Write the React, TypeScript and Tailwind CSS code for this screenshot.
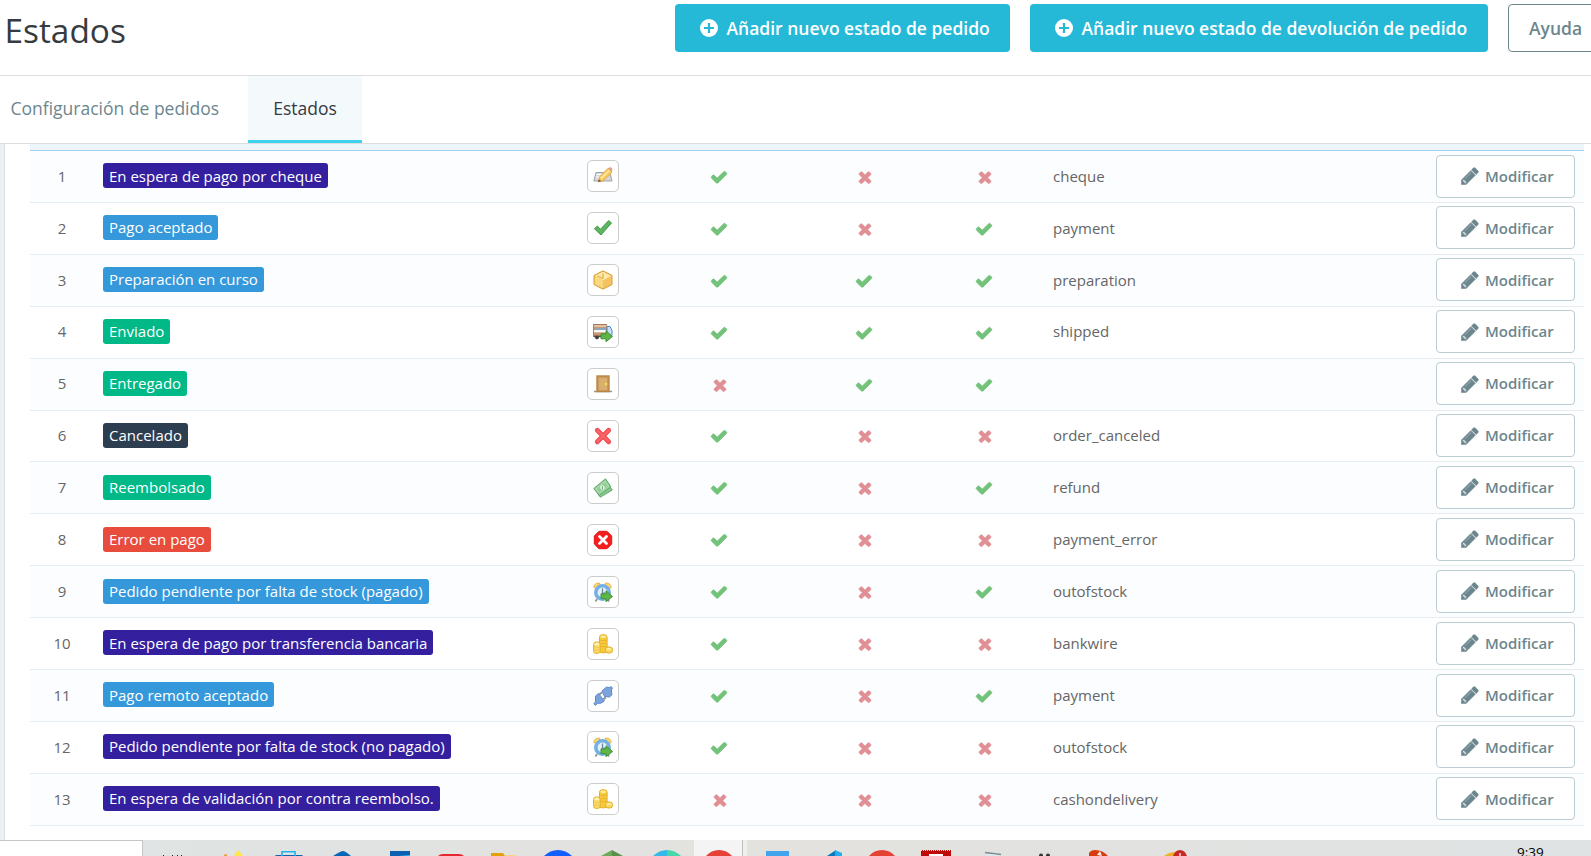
import type { ReactNode } from "react";

const PATHS = {
  check:
    "M1671 566q0 40-28 68l-724 724-136 136q-28 28-68 28t-68-28l-136-136-362-362q-28-28-28-68t28-68l136-136q28-28 68-28t68 28l294 295 656-657q28-28 68-28t68 28l136 136q28 28 28 68z",
  times:
    "M1490 1322q0 40-28 68l-136 136q-28 28-68 28t-68-28l-294-294-294 294q-28 28-68 28t-68-28l-136-136q-28-28-28-68t28-68l294-294-294-294q-28-28-28-68t28-68l136-136q28-28 68-28t68 28l294 294 294-294q28-28 68-28t68 28l136 136q28 28 28 68t-28 68l-294 294 294 294q28 28 28 68z",
  pencil:
    "M491 1536l91-91-235-235-91 91v107h128v128h107zm523-928q0-22-22-22-10 0-17 7l-542 542q-7 7-7 17 0 22 22 22 10 0 17-7l542-542q7-7 7-17zm-54-192l416 416-832 832h-416v-416zm683 96q0 53-37 90l-166 166-416-416 166-165q36-38 90-38 53 0 91 38l235 234q37 39 37 91z",
};

function Flag({ on }: { on: boolean }) {
  return on ? (
    <svg viewBox="0 0 1792 1792" className="mt-px size-[18px] fill-[#72c279] stroke-[#72c279] stroke-[90]">
      <path d={PATHS.check} />
    </svg>
  ) : (
    <svg viewBox="0 0 1792 1792" className="mt-px ml-px size-[18px] fill-[#e08f95] stroke-[#e08f95] stroke-[70]">
      <path d={PATHS.times} />
    </svg>
  );
}

function Plus() {
  return (
    <svg viewBox="0 0 18 18" className="size-[18px]">
      <circle cx="9" cy="9" r="9" fill="#fff" />
      <path d="M9 4v10M4 9h10" stroke="#25b9d7" strokeWidth="2.2" />
    </svg>
  );
}

const arrow = (
  <path d="M8 11.800h5V8.800l6.500 5.700-6.500 5.200v-2.900H8z" fill="#5fb648" stroke="#3f9038" strokeWidth="1" strokeLinejoin="round" />
);

const coins = (
  <>
    <rect x="6.500" y=".8" width="7.600" height="18" rx="2.500" fill="#f6c93c" stroke="#e6ad2a" />
    <ellipse cx="10.300" cy="2.800" rx="3" ry="1.400" fill="#ffed9c" />
    <path d="M7.500 6.500h6M7.500 9.500h6M7.500 12.500h6" stroke="#e7b02c" strokeWidth=".8" />
    <rect x=".6" y="8" width="6.600" height="11.400" rx="2.500" fill="#fbdc68" stroke="#e6ad2a" />
    <ellipse cx="3.900" cy="10" rx="2.500" ry="1.300" fill="#fff3b8" />
    <path d="M1.500 13.300h5M1.500 16.200h5" stroke="#ecc04a" strokeWidth=".8" />
    <rect x="12.300" y="13" width="7.200" height="6" rx="2.600" fill="#fbd95c" stroke="#e6ad2a" />
    <ellipse cx="15.900" cy="15" rx="2.500" ry="1.100" fill="#fff0a6" />
  </>
);

const clock = (
  <>
    <path d="M4 17l-1.500 2.500M14.500 17l1.500 2.500" stroke="#999" strokeWidth="2" />
    <path d="M.8 5.500Q1 1 6.500 1L7 2.500 3 6.300z" fill="#ffd66b" stroke="#e9b44c" />
    <path d="M18.200 5.500Q18 1 12.500 1L12 2.500 16 6.300z" fill="#ffd66b" stroke="#e9b44c" />
    <circle cx="9.500" cy="10.500" r="6.700" fill="#e3f0fb" stroke="#74b1e2" strokeWidth="3.600" />
    <path d="M9.500 6.500v4.500h3" stroke="#6c7f92" strokeWidth="1.200" fill="none" />
    {arrow}
  </>
);

const PICTURES: Record<string, ReactNode> = {
  cheque: (
    <>
      <path d="M3 6.500h14l2 8.500H.8z" fill="#d5d7d8" stroke="#9fa4a7" />
      <path d="M3.500 8.500h7M3 11h5" stroke="#fff" strokeWidth="1.200" />
      <path d="M5.300 15.600l1.500-5L14.800 2.400l4 1-.3 3.600L9.800 15z" fill="#fbc95a" stroke="#dfa040" strokeWidth=".8" />
      <path d="M8 12.300l8.300-8" stroke="#ffeaa8" strokeWidth="1.700" />
      <path d="M15 2.500l1-1q2-.9 3.200 1v1.600l-1.200 1.200z" fill="#e0a48e" />
      <path d="M5 16.200l.9-3 2.300 2z" fill="#6e594a" />
    </>
  ),
  ok: (
    <path d="M1.400 10.800l3-2.800 3 3.300L15.600 2.600l3 2.300L8 17z" fill="#5db460" stroke="#459c4c" strokeLinejoin="round" />
  ),
  box: (
    <>
      <path d="M10 .8l9 4.600v9.200l-9 4.600-9-4.600V5.400z" fill="#f3c361" stroke="#d9a03c" strokeLinejoin="round" />
      <path d="M10 1.700l8 4.200-8 4.300-8-4.300z" fill="#fdeaae" />
      <path d="M2 6.500l8 4.100v7.600l-8-4.200z" fill="#f9d880" />
      <path d="M10 3.500v5.200M10 8.700L4.500 6" stroke="#eabb5a" strokeWidth="1.500" />
    </>
  ),
  truck: (
    <>
      <rect x=".6" y="2.500" width="13" height="11.500" fill="#c99872" stroke="#a57a5a" />
      <path d="M1 4h12.500" stroke="#ecd2bb" strokeWidth="1.400" />
      <path d="M2 7h11" stroke="#69afe4" strokeWidth="1.400" />
      <path d="M1 9.200h12" stroke="#fff" strokeWidth="2.200" />
      <path d="M14 4.500h3l2 4v5h-5z" fill="#c8e3fb" stroke="#4c86d8" />
      <path d="M.5 14.500h10" stroke="#555" strokeWidth="1.400" />
      <circle cx="4" cy="15.400" r="1.900" fill="#3f3f3f" />
      {arrow}
    </>
  ),
  door: (
    <>
      <path d="M1 17.500h18" stroke="#8f9599" strokeWidth="1.500" />
      <rect x="4" y="2" width="12" height="15.500" fill="#cb9a58" stroke="#b98648" strokeWidth="1.400" />
      <path d="M6 4h8v12H6z" fill="#d9af70" />
      <circle cx="13" cy="10" r="1.200" fill="#ffe53b" />
    </>
  ),
  cancel: (
    <>
      <path d="M4.300 4.300l11.400 11.400M15.700 4.300L4.300 15.700" stroke="#f04a50" strokeWidth="4.800" strokeLinecap="round" />
      <path d="M4.300 4.300l11.400 11.400M15.700 4.300L4.300 15.700" stroke="#f66467" strokeWidth="2.600" strokeLinecap="round" />
    </>
  ),
  money: (
    <>
      <path d="M4 14.500L15.500 7l3.800 5-12 7.200z" fill="#8dc993" stroke="#5fa96b" />
      <path d="M.8 10.500L12.500 .8l5.500 8L6 17.500z" fill="#92cc97" stroke="#62ac6d" />
      <path d="M3 11l9-7.500 3.500 5L6.500 15z" fill="none" stroke="#b6e0b8" />
      <circle cx="9.400" cy="9.500" r="2.300" fill="#e5f5e6" />
      <path d="M9.400 8.200v3" stroke="#5aa765" />
    </>
  ),
  error: (
    <>
      <path d="M6 1.300h8L18.700 6v8L14 18.700H6L1.300 14V6z" fill="#f51d1d" stroke="#e01616" />
      <path d="M6.500 6.500l7 7M13.500 6.500l-7 7" stroke="#fff" strokeWidth="2.800" strokeLinecap="round" />
    </>
  ),
  clock,
  coins,
  plug: (
    <>
      <path d="M9 5l4.500-3.900 3 .5L18 .5 19.500 2l-1 1.800.3 5.200-2.400 2.100-4.900-.7z" fill="#7ba3dc" stroke="#5c88cc" />
      <path d="M2.500 10L5.500 7.500l5.900 7.500-3.700 2.300-3.200-.1-2 2.200L.8 17.800l1.700-2z" fill="#7ba3dc" stroke="#5c88cc" />
      <path d="M6.500 8.200l2.300-1.700M10.500 13.200l2.300-1.800" stroke="#8e8e8e" strokeWidth="2" />
    </>
  ),
};

type Row = [string, string, string, boolean, boolean, boolean, string];
const INDIGO = "bg-[#34209e]";
const BLUE = "bg-[#3498db]";
const GREEN = "bg-[#01b887]";

const ROWS: Row[] = [
  ["En espera de pago por cheque", INDIGO, "cheque", true, false, false, "cheque"],
  ["Pago aceptado", BLUE, "ok", true, false, true, "payment"],
  ["Preparación en curso", BLUE, "box", true, true, true, "preparation"],
  ["Enviado", GREEN, "truck", true, true, true, "shipped"],
  ["Entregado", GREEN, "door", false, true, true, ""],
  ["Cancelado", "bg-[#2c3e50]", "cancel", true, false, false, "order_canceled"],
  ["Reembolsado", GREEN, "money", true, false, true, "refund"],
  ["Error en pago", "bg-[#e74c3c]", "error", true, false, false, "payment_error"],
  ["Pedido pendiente por falta de stock (pagado)", BLUE, "clock", true, false, true, "outofstock"],
  ["En espera de pago por transferencia bancaria", INDIGO, "coins", true, false, false, "bankwire"],
  ["Pago remoto aceptado", BLUE, "plug", true, false, true, "payment"],
  ["Pedido pendiente por falta de stock (no pagado)", INDIGO, "clock", true, false, false, "outofstock"],
  ["En espera de validación por contra reembolso.", INDIGO, "coins", false, false, false, "cashondelivery"],
];

function StateRow({ row, index }: { row: Row; index: number }) {
  const [name, color, picture, a, b, c, template] = row;
  return (
    <div
      className={`grid h-[51.92px] grid-cols-[64px_478px_62px_170px_120px_120px_374px_1fr] items-center border-b border-[#e6ecef] text-[15px] text-[#666] ${
        index % 2 === 0 ? "bg-[#fcfdfe]" : "bg-white"
      }`}
    >
      <span className="mb-[0.9px] text-center">{index + 1}</span>
      <div className="pl-[9px]">
        <span className={`inline-flex h-[25px] items-center rounded-[3px] px-[6px] whitespace-nowrap text-white ${color} mb-[1.4px] align-middle`}>
          {name}
        </span>
      </div>
      <div className="flex justify-center">
        <span className="flex size-8 items-center justify-center rounded-[5px] border border-[#ccc] bg-white">
          <svg viewBox="0 0 20 20" className="size-5" fill="none">
            {PICTURES[picture]}
          </svg>
        </span>
      </div>
      <div className="flex justify-center"><Flag on={a} /></div>
      <div className="flex justify-center"><Flag on={b} /></div>
      <div className="flex justify-center"><Flag on={c} /></div>
      <span className="mb-[0.9px] pl-[9px]">{template}</span>
      <div className="mb-[0.9px] flex justify-end pr-[9px]">
        <button className="flex h-[43px] w-[139px] shrink-0 items-center gap-[5px] rounded-[4px] border border-[#bbcdd2] bg-white pl-[23px] font-semibold text-[#6c868e]">
          <svg viewBox="0 0 1792 1792" className="size-[20px] fill-[#6c868e] stroke-[#6c868e] stroke-[50]">
            <path d={PATHS.pencil} />
          </svg>
          Modificar
        </button>
      </div>
    </div>
  );
}

function Tray({ className, children }: { className: string; children: ReactNode }) {
  return (
    <svg viewBox="0 0 30 16" className={`h-4 w-[30px] shrink-0 ${className}`} fill="none">
      {children}
    </svg>
  );
}

function Taskbar() {
  return (
    <div className="flex h-4 shrink-0 overflow-hidden bg-linear-to-r from-[#dfe4e4] via-[#e3e2df] to-[#dfe3e3]">
      <div className="w-[143px] shrink-0 border-t border-r border-[#c3c6c6] bg-white" />
      <Tray className="ml-[15px]">
        <path d="M5 15.500h1M14 15.500h1M19 15.500h1M23 15.500h1" stroke="#222" />
      </Tray>
      <Tray className="ml-[31px]">
        <path d="M15 16q3-5.500 4-5.500T24 16z" fill="#ffe64d" />
        <path d="M5 15.500l3-.5" stroke="#e9a34c" strokeWidth="1.800" />
      </Tray>
      <Tray className="ml-[25px]">
        <path d="M1 16q0-1 2-1h24q2 0 2 1z" fill="#0f65ad" />
        <path d="M8 16v-4.300h13V16" stroke="#20b5ef" strokeWidth="1.600" />
      </Tray>
      <Tray className="ml-[24px]"><path d="M5 16q8-5 10-5t8 5z" fill="#0868b8" /></Tray>
      <Tray className="ml-[27px]">
        <path d="M5 11h20v5H5z" fill="#0b61b0" />
        <path d="M13 16l12-1v1z" fill="#35baf5" />
      </Tray>
      <Tray className="ml-[21px]"><path d="M2 16q2-2 5-2h16q3 0 5 2z" fill="#e72531" /></Tray>
      <Tray className="ml-[21px]">
        <path d="M4 16v-3h12l2 3z" fill="#e2a20e" />
        <path d="M18 15h11v1H18z" fill="#f7d77c" />
      </Tray>
      <Tray className="ml-[26px]"><path d="M1 16q6-6 14-6t14 6z" fill="#125fff" /></Tray>
      <Tray className="ml-[24px]">
        <path d="M4 16l11-6v6z" fill="#6daa58" />
        <path d="M15 10l11 6H15z" fill="#58914a" />
      </Tray>
      <Tray className="ml-[25px]">
        <path d="M1 16q6-6 14-6v6z" fill="#35b8ea" />
        <path d="M15 10q8 0 14 6H15z" fill="#47d7a8" />
      </Tray>
      <div className="ml-[12px] flex w-[49px] shrink-0 border-r border-[#bfc1c1] bg-[#f4f4f4]">
        <Tray className="ml-[10px]"><path d="M2 16q5-6 13-6t13 6z" fill="#e54134" /></Tray>
      </div>
      <div className="w-1 shrink-0 bg-[#efefef]" />
      <Tray className="ml-[15px]"><path d="M4 11h23v5H4z" fill="#42a4ec" /></Tray>
      <Tray className="ml-[28px]">
        <path d="M7 16l9-6v6z" fill="#0877b9" />
        <path d="M15 10l7 3v3h-7z" fill="#22aef0" />
      </Tray>
      <Tray className="ml-[17px]"><path d="M2 16q5-6 13-6t13 6z" fill="#e54134" /></Tray>
      <Tray className="ml-[24px]">
        <path d="M0 10h30v6H0z" fill="#bf0808" />
        <path d="M8 15h14" stroke="#fff" strokeWidth="2" />
        <path d="M0 10.500h30" stroke="#e3e3e1" strokeDasharray="1 1" />
      </Tray>
      <Tray className="ml-[28px]">
        <path d="M6 12.500l16 2" stroke="#7c8d91" strokeWidth="1.600" />
        <path d="M8 15l12 1" stroke="#d8e9ed" strokeWidth="2" />
      </Tray>
      <Tray className="ml-[21px]">
        <circle cx="11" cy="15.500" r="2" fill="#333" />
        <circle cx="18" cy="15.500" r="2" fill="#333" />
      </Tray>
      <Tray className="ml-[23px]">
        <path d="M6 16v-3q2-3 6-3 8 0 13 6z" fill="#d83b0c" />
        <path d="M14 15l3-4 2 5z" fill="#eee" />
      </Tray>
      <Tray className="ml-[46px]">
        <path d="M5 16q5-4 12-4v4z" fill="#edb229" />
        <path d="M14 16q2-6 7-6t7 6z" fill="#c92924" />
        <path d="M21 13v3" stroke="#fff" strokeWidth="1.200" />
      </Tray>
      <span className="ml-[328px] pt-[3px] text-[13.5px] leading-[18px] text-black">9:39</span>
    </div>
  );
}

export default function App() {
  return (
    <div className="flex h-[856px] w-full flex-col overflow-hidden bg-white font-['Open_Sans',sans-serif]">
      <header className="flex h-[76px] shrink-0 items-start border-b border-[#dddddd] pt-1 pl-[4.5px]">
        <h1 className="w-[670.5px] shrink-0 pt-[4.500px] text-[33.4px] leading-[42px] text-[#363a41]">Estados</h1>
        <button className="flex h-12 w-[335px] shrink-0 items-center gap-[8.5px] rounded-[4px] bg-[#25b9d7] pl-[25px] text-[17.5px] font-semibold whitespace-nowrap text-white">
          <Plus />
          Añadir nuevo estado de pedido
        </button>
        <button className="ml-5 flex h-12 w-[458px] shrink-0 items-center gap-[8.5px] rounded-[4px] bg-[#25b9d7] pl-[25px] text-[17.5px] font-semibold whitespace-nowrap text-white">
          <Plus />
          Añadir nuevo estado de devolución de pedido
        </button>
        <button className="ml-5 h-12 w-[110px] shrink-0 rounded-[4px] border border-[#6c868e] pl-5 text-left text-[17.5px] font-semibold text-[#6c868e]">
          Ayuda
        </button>
      </header>
      <nav className="flex h-[68px] shrink-0 border-b border-[#dddddd] text-[17.5px]">
        <a className="flex w-[248px] items-center pb-[3px] pl-[10.5px] text-[#6c868e]">Configuración de pedidos</a>
        <a className="flex w-[114px] items-center justify-center border-b-[3px] border-[#3ed2f0] bg-[#f4f9fb] text-[#363a41]">
          Estados
        </a>
      </nav>
      <main className="flex h-[696px] shrink-0">
        <div className="w-[5px] border-r border-[#d9e3e6] bg-[#ebf0f1]" />
        <section className="ml-[25px] w-[1554px]">
          <div className="h-[7px] border-b border-[#a0d0eb] bg-[#edf5fc]" />
          {ROWS.map((row, i) => (
            <StateRow key={row[0]} row={row} index={i} />
          ))}
        </section>
      </main>
      <Taskbar />
    </div>
  );
}
